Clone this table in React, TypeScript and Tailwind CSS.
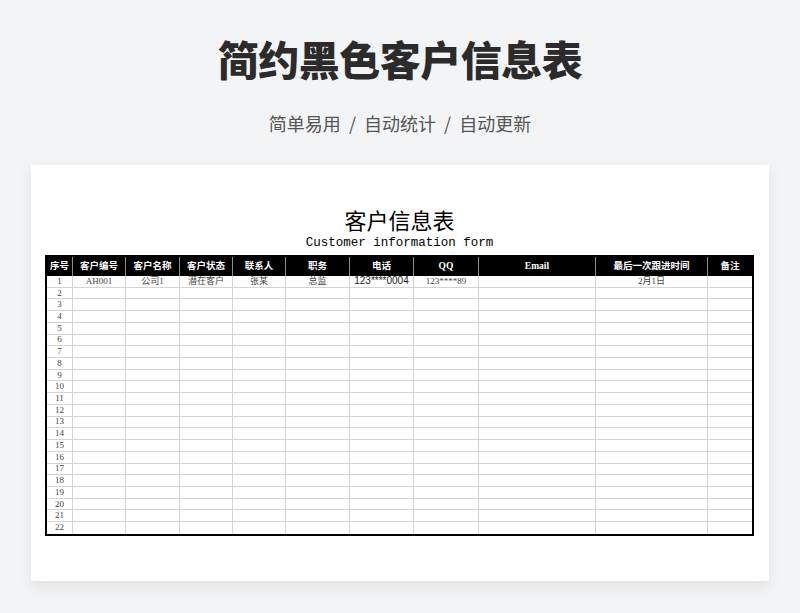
import React from 'react';

const columns = [
  { label: '序号', width: 'w-[26px]' },
  { label: '客户编号', width: 'w-[53px]' },
  { label: '客户名称', width: 'w-[54px]' },
  { label: '客户状态', width: 'w-[53px]' },
  { label: '联系人', width: 'w-[53px]' },
  { label: '职务', width: 'w-[64px]' },
  { label: '电话', width: 'w-[64px]' },
  { label: 'QQ', width: 'w-[65px]' },
  { label: 'Email', width: 'w-[117px]' },
  { label: '最后一次跟进时间', width: 'w-[112px]' },
  { label: '备注', width: 'w-[44px]' },
];

const firstRow = ['AH001', '公司1', '潜在客户', '张某', '总监', '123****0004', '123****89', '', '2月1日', ''];

const serif = { fontFamily: '"Liberation Serif", "Noto Sans CJK SC", serif' };

const App: React.FC = () => {
  const rows = Array.from({ length: 22 }, (_, i) => i + 1);

  return (
    <div className="h-[613px] w-full bg-[#f3f4f6] flex flex-col items-center overflow-hidden font-['Noto_Sans_CJK_SC',sans-serif]">
      <h1 className="mt-[33px] text-[41px] leading-[50px] font-black text-[#2b2b2b] tracking-[-0.5px]">
        简约黑色客户信息表
      </h1>
      <p className="mt-[27px] text-[18px] leading-[26px] text-[#555]">
        简单易用 <span className="mx-[4px]">/</span> 自动统计 <span className="mx-[4px]">/</span> 自动更新
      </p>

      <div className="mt-[29px] w-[738px] h-[416px] bg-white shadow-[0_6px_14px_rgba(0,0,0,0.08)] pl-[14px] pr-[15px] pt-[43px]">
        <div className="flex flex-col items-center">
          <div className="text-[22px] leading-[28px] text-black" style={serif}>
            客户信息表
          </div>
          <div className="-mt-[1px] text-[12.5px] leading-[16px] text-black font-['Liberation_Mono',monospace]">
            Customer information form
          </div>
        </div>

        <div className="mt-[4px] w-[709px] border-2 border-black" style={serif}>
          <div className="flex h-[19px] bg-black">
            {columns.map((col, i) => (
              <div
                key={col.label}
                className={`${col.width} shrink-0 flex items-center justify-center text-white text-[9.5px] font-bold ${
                  i < columns.length - 1 ? 'border-r border-[#8a8a8a]' : ''
                }`}
              >
                {col.label}
              </div>
            ))}
          </div>
          {rows.map((n) => (
            <div key={n} className="flex h-[11.73px]">
              {columns.map((col, i) => {
                let text = '';
                if (i === 0) text = String(n);
                else if (n === 1) text = firstRow[i - 1];
                const isPhone = n === 1 && i === 6;
                return (
                  <div
                    key={col.label}
                    className={`${col.width} shrink-0 flex items-center justify-center overflow-hidden whitespace-nowrap leading-none ${
                      n < 22 ? 'border-b border-[#d4d4d4]' : ''
                    } ${i < columns.length - 1 ? 'border-r border-[#d4d4d4]' : ''} ${
                      isPhone
                        ? "text-[10px] text-[#222] font-['Liberation_Sans',sans-serif]"
                        : 'text-[9px] text-[#444]'
                    }`}
                  >
                    {text}
                  </div>
                );
              })}
            </div>
          ))}
        </div>
      </div>
    </div>
  );
};

export default App;
